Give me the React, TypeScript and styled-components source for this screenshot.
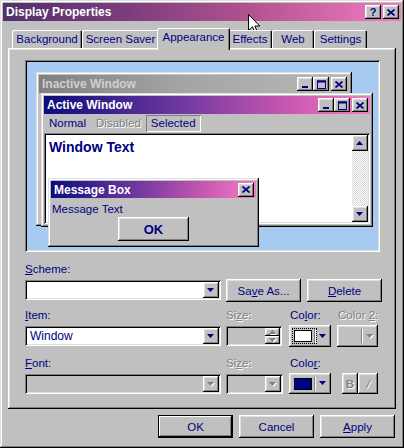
import React from 'react';
import styled, { createGlobalStyle, css } from 'styled-components';

const NAVY = '#000080';
const FACE = '#c0c0c0';

const GlobalStyle = createGlobalStyle`
  html, body { margin: 0; padding: 0; background: ${FACE}; }
  body {
    font-family: "Liberation Sans", Arial, sans-serif;
    font-size: 11px;
    color: ${NAVY};
  }
  * { box-sizing: border-box; }
  u { text-decoration: underline; text-underline-offset: 1px; }
`;

const raised = css`
  box-shadow: inset -1px -1px #000, inset 1px 1px #fff, inset -2px -2px #808080, inset 2px 2px #dfdfdf;
`;

const sunken = css`
  box-shadow: inset 1px 1px #808080, inset -1px -1px #fff, inset 2px 2px #000, inset -2px -2px #dfdfdf;
`;

const activeGradient = 'linear-gradient(to right, #0c0c7c 0%, #7038a0 42%, #c858b0 75%, #f47cc4 100%)';
const inactiveGradient = 'linear-gradient(to right, #808080 0%, #a4a4a4 45%, #b8b8b8 100%)';

/* ---------- dialog frame ---------- */

const Dialog = styled.div`
  position: relative;
  width: 404px;
  height: 448px;
  padding: 3px;
  display: flex;
  flex-direction: column;
  background: ${FACE};
  box-shadow: inset -1px -1px #000, inset 1px 1px #dfdfdf, inset -2px -2px #808080, inset 2px 2px #fff;
`;

const TitleBar = styled.div`
  height: 18px;
  display: flex;
  align-items: center;
  padding: 0 2px 0 3px;
  background: linear-gradient(to right, #52306a 0%, #7a3c7c 30%, #b0508e 60%, #f07cc2 100%);
  color: #fff;
  font-weight: bold;
  font-size: 12px;
`;

const CaptionGroup = styled.div<{ $gap?: number }>`
  margin-left: auto;
  display: flex;
  gap: ${(p) => p.$gap ?? 0}px;
`;

const CaptionButton = styled.div`
  width: 16px;
  height: 14px;
  display: flex;
  align-items: center;
  justify-content: center;
  background: ${FACE};
  color: ${NAVY};
  font-weight: bold;
  font-size: 11px;
  line-height: 14px;
  ${raised}
`;

const TabStrip = styled.div`
  height: 20px;
  margin-top: 7px;
  padding-left: 9px;
  display: flex;
  align-items: flex-end;
`;

const Tab = styled.div<{ $w: number; $active?: boolean }>`
  position: relative;
  width: ${(p) => p.$w + (p.$active ? 4 : 0)}px;
  height: ${(p) => (p.$active ? 22 : 18)}px;
  margin: 0 ${(p) => (p.$active ? -2 : 0)}px ${(p) => (p.$active ? -2 : 0)}px;
  z-index: ${(p) => (p.$active ? 2 : 1)};
  padding-top: 3px;
  text-align: center;
  font-size: 11.5px;
  background: ${FACE};
  border-radius: 2px 2px 0 0;
  box-shadow: inset 1px 1px #fff, inset -1px 0 #000, inset -2px 0 #808080;
`;

const Panel = styled.div`
  height: 361px;
  margin: 0 5px;
  padding: 12px 14px 0 17px;
  background: ${FACE};
  ${raised}
`;

const ButtonRow = styled.div`
  margin-top: 6px;
  padding-right: 6px;
  display: flex;
  justify-content: flex-end;
  gap: 6px;
`;

const PushButton = styled.div<{ $w?: number; $h?: number; $default?: boolean; $bold?: boolean }>`
  width: ${(p) => p.$w ?? 75}px;
  height: ${(p) => p.$h ?? 23}px;
  display: flex;
  align-items: center;
  justify-content: center;
  background: ${FACE};
  font-size: ${(p) => (p.$bold ? 13 : 11.5)}px;
  font-weight: ${(p) => (p.$bold ? 'bold' : 'normal')};
  ${(p) =>
    p.$default
      ? css`
          box-shadow: inset 0 0 0 1px #000, inset -2px -2px #000, inset 2px 2px #fff, inset -3px -3px #808080;
        `
      : raised}
`;

/* ---------- preview desktop ---------- */

const Preview = styled.div`
  position: relative;
  height: 192px;
  width: 355px;
  background: #a6caf0;
  overflow: hidden;
  ${sunken}
`;

const MiniWindow = styled.div<{ $x: number; $y: number; $w: number; $h: number }>`
  position: absolute;
  left: ${(p) => p.$x}px;
  top: ${(p) => p.$y}px;
  width: ${(p) => p.$w}px;
  height: ${(p) => p.$h}px;
  padding: 3px;
  display: flex;
  flex-direction: column;
  background: ${FACE};
  box-shadow: inset -1px -1px #000, inset 1px 1px #dfdfdf, inset -2px -2px #808080, inset 2px 2px #fff;
`;

const MiniTitle = styled.div<{ $active?: boolean; $h?: number }>`
  height: ${(p) => p.$h ?? 18}px;
  flex: none;
  display: flex;
  align-items: center;
  padding: 0 2px 0 3px;
  background: ${(p) => (p.$active ? activeGradient : inactiveGradient)};
  color: ${(p) => (p.$active ? '#fff' : '#cfcfcf')};
  font-weight: bold;
  font-size: 12px;
`;

const MenuBar = styled.div`
  height: 19px;
  flex: none;
  display: flex;
  align-items: center;
`;

const MenuItem = styled.div<{ $state?: 'disabled' | 'selected' }>`
  height: 17px;
  line-height: 17px;
  padding: 0 5px;
  font-size: 11.5px;
  color: ${(p) => (p.$state === 'disabled' ? '#808080' : NAVY)};
  text-shadow: ${(p) => (p.$state === 'disabled' ? '1px 1px #fff' : 'none')};
  box-shadow: ${(p) => (p.$state === 'selected' ? 'inset 1px 1px #808080, inset -1px -1px #fff' : 'none')};
`;

const ClientArea = styled.div`
  flex: 1;
  display: flex;
  padding: 2px;
  ${sunken}
`;

const ClientText = styled.div`
  flex: 1;
  background: #fff;
  padding: 4px 3px;
  font-size: 14px;
  font-weight: bold;
`;

const ScrollBar = styled.div`
  width: 16px;
  display: flex;
  flex-direction: column;
`;

const ScrollTrack = styled.div`
  flex: 1;
  background-color: #e8e8e8;
  background-image: repeating-conic-gradient(#d4d4d4 0 25%, #ffffff 0 50%);
  background-size: 2px 2px;
`;

const ArrowButton = styled.div<{ $w?: number; $h?: number }>`
  width: ${(p) => p.$w ?? 16}px;
  height: ${(p) => p.$h ?? 16}px;
  flex: none;
  display: flex;
  align-items: center;
  justify-content: center;
  background: ${FACE};
  ${raised}
`;

const MessageBody = styled.div`
  flex: 1;
  display: flex;
  flex-direction: column;
  align-items: center;
`;

const MessageText = styled.div`
  align-self: stretch;
  padding: 5px 0 0 1px;
  height: 19px;
  line-height: 13px;
  font-size: 11.5px;
`;

/* ---------- form ---------- */

const Label = styled.div<{ $disabled?: boolean; $top?: number }>`
  height: 13px;
  line-height: 13px;
  margin-top: ${(p) => p.$top ?? 0}px;
  font-size: 11.5px;
  color: ${(p) => (p.$disabled ? '#808080' : NAVY)};
  text-shadow: ${(p) => (p.$disabled ? '1px 1px #fff' : 'none')};
  white-space: nowrap;
`;

const SchemeRow = styled.div`
  margin-top: 4px;
  display: flex;
  align-items: flex-start;
  gap: 5px;

  & > :last-child {
    margin-left: 1px;
  }
`;

const FieldGrid = styled.div<{ $top: number }>`
  margin-top: ${(p) => p.$top}px;
  display: grid;
  grid-template-columns: 201px 63px 48px 1fr;
  row-gap: 3px;
  align-items: start;
`;

const Combo = styled.div<{ $w: number; $disabled?: boolean; $top?: number }>`
  width: ${(p) => p.$w}px;
  height: 20px;
  margin-top: ${(p) => p.$top ?? 0}px;
  padding: 2px;
  display: flex;
  align-items: center;
  background: ${(p) => (p.$disabled ? FACE : '#fff')};
  ${sunken}
`;

const ComboValue = styled.div`
  flex: 1;
  padding-left: 3px;
  font-size: 12px;
`;

const ColorButton = styled.div<{ $h: number; $disabled?: boolean }>`
  position: relative;
  width: 42px;
  height: ${(p) => p.$h}px;
  padding: 0 4px 0 5px;
  display: flex;
  align-items: center;
  justify-content: ${(p) => (p.$disabled ? 'flex-end' : 'flex-start')};
  background: ${FACE};
  ${raised}
`;

const Swatch = styled.div<{ $color: string }>`
  width: 22px;
  height: 12px;
  border: 1px solid #000;
  background: ${(p) => p.$color};
`;

const FocusRing = styled.div`
  position: absolute;
  inset: 3px 14px 3px 3px;
  border: 1px dotted #000;
`;

const Divider = styled.div`
  width: 2px;
  height: 14px;
  margin: 0 3px 0 2px;
  border-left: 1px solid #808080;
  border-right: 1px solid #fff;
`;

const Spinner = styled.div`
  width: 56px;
  height: 20px;
  margin-top: 1px;
  padding: 2px;
  display: flex;
  justify-content: flex-end;
  background: ${FACE};
  ${sunken}
`;

const SpinStack = styled.div`
  display: flex;
  flex-direction: column;
`;

const StyleButtons = styled.div`
  margin-left: 5px;
  display: flex;
`;

const Cursor = styled.svg`
  position: absolute;
  left: 248px;
  top: 14px;
`;

/* ---------- glyphs ---------- */

const Tri = ({ up, disabled }: { up?: boolean; disabled?: boolean }) => (
  <svg width="8" height="5" viewBox="0 0 8 5" style={{ overflow: 'visible' }}>
    {disabled && <polygon points={up ? '1,5 8,5 4.5,1' : '1,1 8,1 4.5,5'} fill="#fff" />}
    <polygon points={up ? '0,4 7,4 3.5,0' : '0,0 7,0 3.5,4'} fill={disabled ? '#808080' : NAVY} />
  </svg>
);

const CloseGlyph = () => (
  <svg width="8" height="7" viewBox="0 0 8 7">
    <path d="M0.5 0.5 L7.5 6.5 M7.5 0.5 L0.5 6.5" stroke={NAVY} strokeWidth="1.7" />
  </svg>
);

const MinGlyph = () => (
  <svg width="8" height="9" viewBox="0 0 8 9">
    <rect x="1" y="6" width="6" height="2" fill={NAVY} />
  </svg>
);

const MaxGlyph = () => (
  <svg width="9" height="9" viewBox="0 0 9 9">
    <rect x="0.5" y="1" width="8" height="7.5" fill="none" stroke={NAVY} strokeWidth="1" />
    <rect x="0" y="0.5" width="9" height="2" fill={NAVY} />
  </svg>
);

const WindowButtons = ({ close, min }: { close?: boolean; min?: boolean }) => (
  <CaptionGroup>
    {min && (
      <>
        <CaptionButton><MinGlyph /></CaptionButton>
        <CaptionButton><MaxGlyph /></CaptionButton>
      </>
    )}
    {close && (
      <CaptionButton style={{ marginLeft: min ? 2 : 0 }}>
        <CloseGlyph />
      </CaptionButton>
    )}
  </CaptionGroup>
);

const tabs = [
  { label: 'Background', w: 70 },
  { label: 'Screen Saver', w: 77 },
  { label: 'Appearance', w: 69, active: true },
  { label: 'Effects', w: 44 },
  { label: 'Web', w: 42 },
  { label: 'Settings', w: 53 },
];

export default function App() {
  return (
    <>
      <GlobalStyle />
      <Dialog>
        <TitleBar>
          Display Properties
          <CaptionGroup $gap={2}>
            <CaptionButton>?</CaptionButton>
            <CaptionButton><CloseGlyph /></CaptionButton>
          </CaptionGroup>
        </TitleBar>

        <TabStrip>
          {tabs.map((t) => (
            <Tab key={t.label} $w={t.w} $active={t.active}>
              {t.label}
            </Tab>
          ))}
        </TabStrip>

        <Panel>
          <Preview>
            <MiniWindow $x={11} $y={12} $w={316} $h={154}>
              <MiniTitle>
                Inactive Window
                <WindowButtons min close />
              </MiniTitle>
            </MiniWindow>

            <MiniWindow $x={16} $y={33} $w={332} $h={134}>
              <MiniTitle $active>
                Active Window
                <WindowButtons min close />
              </MiniTitle>
              <MenuBar>
                <MenuItem>Normal</MenuItem>
                <MenuItem $state="disabled">Disabled</MenuItem>
                <MenuItem $state="selected">Selected</MenuItem>
              </MenuBar>
              <ClientArea>
                <ClientText>Window Text</ClientText>
                <ScrollBar>
                  <ArrowButton><Tri up /></ArrowButton>
                  <ScrollTrack />
                  <ArrowButton><Tri /></ArrowButton>
                </ScrollBar>
              </ClientArea>
            </MiniWindow>

            <MiniWindow $x={23} $y={118} $w={211} $h={69}>
              <MiniTitle $active $h={17}>
                Message Box
                <WindowButtons close />
              </MiniTitle>
              <MessageBody>
                <MessageText>Message Text</MessageText>
                <PushButton $w={71} $h={24} $bold>OK</PushButton>
              </MessageBody>
            </MiniWindow>
          </Preview>

          <Label $top={11}><u>S</u>cheme:</Label>
          <SchemeRow>
            <Combo $w={196}>
              <ComboValue />
              <ArrowButton><Tri /></ArrowButton>
            </Combo>
            <PushButton style={{ marginTop: -1 }}>Sa<u>v</u>e As...</PushButton>
            <PushButton style={{ marginTop: -1 }}><u>D</u>elete</PushButton>
          </SchemeRow>

          <FieldGrid $top={7}>
            <Label><u>I</u>tem:</Label>
            <Label $disabled>Si<u>z</u>e:</Label>
            <Label style={{ paddingLeft: 1 }}>Co<u>l</u>or:</Label>
            <Label $disabled style={{ paddingLeft: 1 }}>Color <u>2</u>:</Label>

            <Combo $w={196} $top={1}>
              <ComboValue>Window</ComboValue>
              <ArrowButton><Tri /></ArrowButton>
            </Combo>
            <Spinner>
              <SpinStack>
                <ArrowButton $w={15} $h={8}><Tri up disabled /></ArrowButton>
                <ArrowButton $w={15} $h={8}><Tri disabled /></ArrowButton>
              </SpinStack>
            </Spinner>
            <ColorButton $h={22}>
              <Swatch $color="#fff" />
              <Divider />
              <Tri />
              <FocusRing />
            </ColorButton>
            <ColorButton $h={22} $disabled style={{ width: 41 }}>
              <Divider />
              <Tri disabled />
            </ColorButton>
          </FieldGrid>

          <FieldGrid $top={10}>
            <Label><u>F</u>ont:</Label>
            <Label $disabled>Si<u>z</u>e:</Label>
            <Label style={{ paddingLeft: 1 }}>Colo<u>r</u>:</Label>
            <span />

            <Combo $w={196} $top={1} $disabled>
              <ComboValue />
              <ArrowButton><Tri disabled /></ArrowButton>
            </Combo>
            <Combo $w={57} $top={1} $disabled>
              <ComboValue />
              <ArrowButton><Tri disabled /></ArrowButton>
            </Combo>
            <ColorButton $h={21}>
              <Swatch $color={NAVY} />
              <Divider />
              <Tri />
            </ColorButton>
            <StyleButtons>
              <PushButton $w={16} $h={21} style={{ color: '#808080', textShadow: '1px 1px #fff', fontWeight: 'bold' }}>
                B
              </PushButton>
              <PushButton $w={20} $h={21} style={{ color: '#808080', textShadow: '1px 1px #fff', fontStyle: 'italic' }}>
                /
              </PushButton>
            </StyleButtons>
          </FieldGrid>
        </Panel>

        <ButtonRow>
          <PushButton $default>OK</PushButton>
          <PushButton>Cancel</PushButton>
          <PushButton><u>A</u>pply</PushButton>
        </ButtonRow>

        <Cursor width="13" height="21" viewBox="0 0 13 21">
          <path d="M0.5 0.5 L0.5 16.5 L4.5 12.8 L7.3 19.5 L9.6 18.5 L6.9 12 L11.8 12 Z" fill="#fff" stroke="#000" strokeWidth="1" />
        </Cursor>
      </Dialog>
    </>
  );
}
